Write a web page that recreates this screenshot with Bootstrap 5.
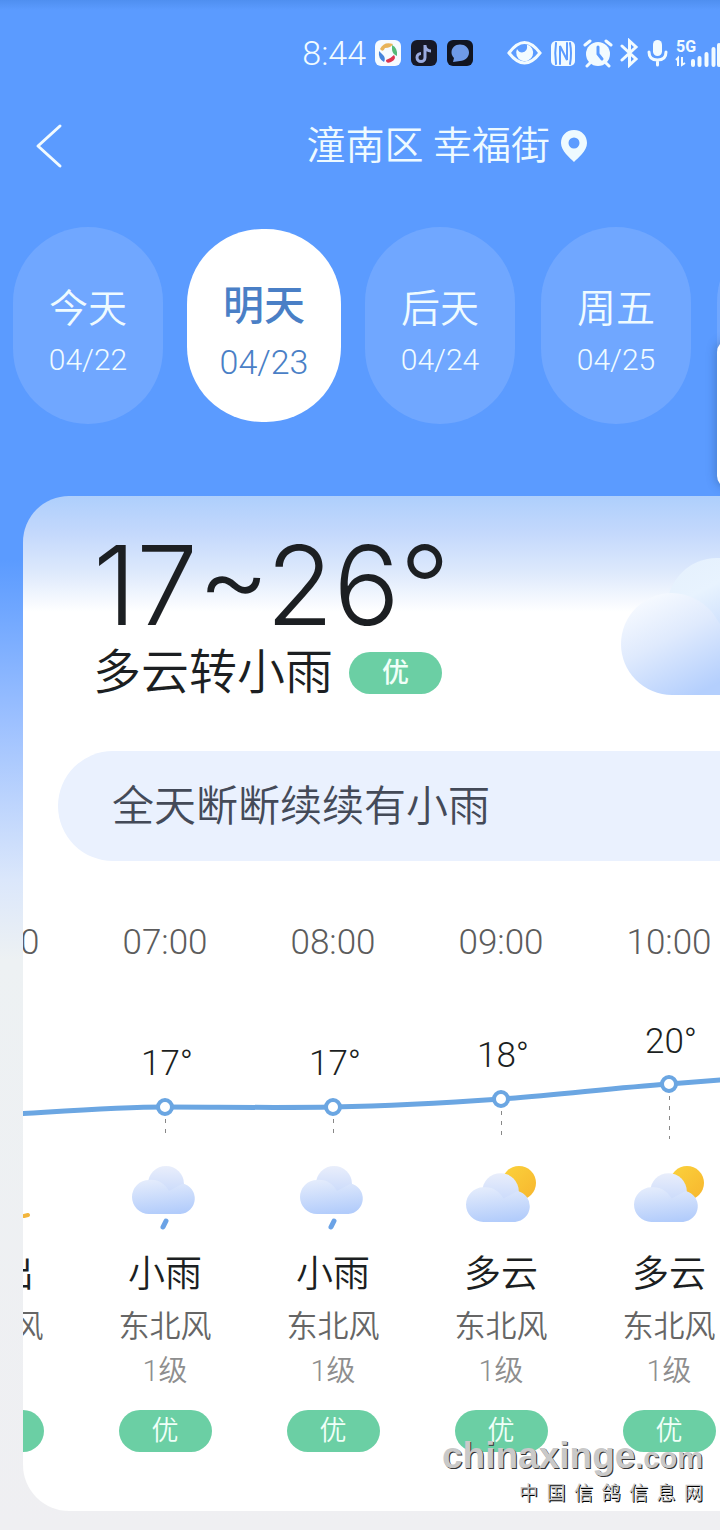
<!DOCTYPE html>
<html lang="zh-CN">
<head>
<meta charset="utf-8">
<meta name="viewport" content="width=device-width, initial-scale=1">
<title>天气预报</title>
<link href="https://cdn.jsdelivr.net/npm/bootstrap@5.3.0/dist/css/bootstrap.min.css" rel="stylesheet">
<style>
  body {
    font-family: Roboto, "Noto Sans CJK SC", sans-serif;
    font-weight: 350;
    color: #1c1f22;
    background: linear-gradient(#4f8ff0 0, #5b9bff 10px, #5b9bff 560px, #9cc0ff 720px, #dbe7fb 880px, #edf1f3 960px, #efeff2 1530px) #efeff2;
    background-repeat: no-repeat;
  }
  .screen { padding-bottom: 19px; }
  .status-bar { height: 106px; color: #f2fbff; overflow: hidden; }
  .clock { font-size: 34px; line-height: 40px; }
  .place-bar { height: 80px; padding: 0 132px 0 34px; color: #eefaff; }
  .place-name { font-size: 39px; line-height: 56px; }
  .days { margin-top: 38px; height: 203px; overflow: hidden; }
  .day-slot { flex: 0 0 176px; }
  .day-pill {
    width: 150px; height: 197px; border-radius: 75px; border: 0; padding: 12px 0 0;
    background: #70a7ff; color: #effbff; font-weight: 350;
  }
  .day-pill .day-name { font-size: 39px; line-height: 56px; }
  .day-pill .day-date { font-size: 30px; line-height: 46px; }
  .day-pill.active { width: 154px; height: 193px; background: #fff; color: #4a7fc6; }
  .day-pill.active .day-name { font-size: 41px; line-height: 60px; font-weight: 500; }
  .day-pill.active .day-date { font-size: 34px; line-height: 52px; }
  .side-tab { top: 340px; right: -21px; width: 24px; height: 148px; background: #fff; border-radius: 12px; box-shadow: -2px 0 8px rgba(40,80,130,.35); }
  .forecast {
    margin: 69px 0 0 23px; border-radius: 46px 0 0 46px; overflow: hidden;
    background: linear-gradient(#aecffc 0, #c3d8fc 36px, #dde9fc 76px, #fff 116px) #fff;
    padding-bottom: 59px;
  }
  .hero { padding: 31px 0 0 70px; height: 255px; }
  .range { font-family: Inter, sans-serif; font-size: 110px; line-height: 116px; font-weight: 350; }
  .summary-sky { font-size: 48px; line-height: 60px; }
  .air { width: 93px; height: 42px; border-radius: 21px; background: #6bcfa4; color: #f0fff8; font-size: 27px; line-height: 42px; text-align: center; }
  .air-main { font-weight: 500; }
  .big-cloud { top: 52px; right: 0; }
  .note { margin-left: 35px; height: 110px; padding-left: 54px; border-radius: 55px 0 0 55px; background: #eaf1fe; color: #444a58; font-size: 42px; }
  .track { width: 1008px; margin-left: -110px; }
  .slots { display: grid; grid-template-columns: repeat(6, 168px); text-align: center; }
  .hour { font-size: 35px; line-height: 52px; color: #5c5c5c; padding-top: 56px; }
  .curve text { font-size: 35px; fill: #1c1f22; text-anchor: middle; }
  .sky-icon { height: 72px; margin-top: 15px; }
  .sky { font-size: 37px; line-height: 54px; margin-top: 14px; }
  .wind { font-size: 31px; line-height: 46px; margin-top: 2px; color: #666; }
  .force { font-size: 29px; line-height: 42px; color: #8e8e8e; margin-bottom: 18px; }
  .site-mark { right: 17px; bottom: 24px; color: #c9c9c9; font-weight: 700; text-shadow: 1px 1px 0 #333; }
  .site-name { font-family: "Liberation Sans", sans-serif; font-size: 37px; line-height: 48px; }
  .site-name span { font-size: 29px; }
  .site-cn { width: 184px; margin-left: auto; font-size: 19px; line-height: 24px; font-weight: 400; color: #c4c4c4; text-shadow: 1px 1px 0 #000; }
</style>
</head>
<body>
<svg width="0" height="0" class="position-absolute" aria-hidden="true">
  <defs>
    <linearGradient id="puffTop" x1="0" y1="0" x2="0" y2="1"><stop offset="0" stop-color="#e9eefb"/><stop offset="1" stop-color="#c0d4fb"/></linearGradient>
    <linearGradient id="puff" x1=".3" y1="0" x2=".5" y2="1"><stop offset="0" stop-color="#e4ecfc"/><stop offset="1" stop-color="#b2ccfb"/></linearGradient>
    <linearGradient id="sun" x1="0" y1="0" x2="1" y2="1"><stop offset="0" stop-color="#fbd23c"/><stop offset="1" stop-color="#f7b62e"/></linearGradient>
    <symbol id="cloud" viewBox="0 0 64 48">
      <circle cx="34" cy="18" r="18" fill="url(#puffTop)"/>
      <path d="M17 48A17 17 0 0 1 17 14C26 13 33 18 37 25L51 17.500A15.500 15.500 0 0 1 48.500 48Z" fill="url(#puff)"/>
    </symbol>
    <symbol id="rain" viewBox="0 0 72 72">
      <use href="#cloud" x="3" y="4" width="64" height="48"/>
      <path d="M37 59l-3 6" stroke="#6ba3e6" stroke-width="5" stroke-linecap="round"/>
    </symbol>
    <symbol id="cloudy" viewBox="0 0 72 72">
      <circle cx="54" cy="21" r="17" fill="url(#sun)"/>
      <use href="#cloud" x="1" y="11" width="65" height="49"/>
    </symbol>
  </defs>
</svg>

<div class="screen position-relative overflow-hidden">
  <header class="status-bar d-flex align-items-center justify-content-end">
    <span class="clock me-2">8:44</span>
    <svg class="me-2" width="101" height="28" viewBox="0 0 101 28" aria-hidden="true">
      <rect x="1" y="1" width="26" height="26" rx="6" fill="#f6fbff"/>
      <path d="M6 10Q10 2 19 5Q17 9 11 9Q9 14 6 10Z" fill="#e8b45a"/>
      <path d="M18 6Q24 9 23 17Q18 15 18 10Z" fill="#55ba78"/>
      <path d="M5 12Q4 20 10 23Q12 19 9 16Z" fill="#4583dc"/>
      <path d="M12 21Q16 20 20 16Q23 20 17 23Q12 25 12 21Z" fill="#dc3550"/>
      <rect x="37" y="1" width="26" height="26" rx="6" fill="#171927"/>
      <path d="M51 6V18.500A4 4 0 1 1 47 14.500M51 7Q52 12 57 12" fill="none" stroke="#9aabe0" stroke-width="3"/>
      <rect x="73" y="1" width="26" height="26" rx="6" fill="#111522"/>
      <path d="M86 5.500C91 5.500 95 9 95 13.500S91 22 86 22L79 23L80 19C78 17 77.500 15 77.500 13.500C77.500 9 81 5.500 86 5.500Z" fill="#6e9ae8"/>
    </svg>
    <svg class="ms-4" width="166" height="30" viewBox="0 0 166 30" fill="none" stroke="#f2fbff" stroke-width="3" stroke-linecap="round" aria-hidden="true">
      <path d="M2 15Q17.500 -6 33 15Q17.500 35 2 15Z"/>
      <path fill="#f2fbff" stroke="none" fill-rule="evenodd" d="M10 11A8.500 8.500 0 1 0 20 6.500Q21 14 15 14.500Q12 14.500 10 11Z"/>
      <rect x="44" y="3" width="24" height="25" rx="5" fill="#f2fbff" stroke="none"/>
      <path d="M49 5Q47.500 15 49 26M53 26V8L60 22V5M63 26Q65 15 63 5" stroke="#5b9bff" stroke-width="2"/>
      <circle cx="91" cy="16" r="12" fill="#f2fbff" stroke="none"/>
      <path d="M78 7L83 3M99 3L104 7M83 25L80 28M99 25L102 28"/>
      <path d="M91 9V16L95 21" stroke="#5b9bff"/>
      <path d="M115 8L129 21L122.500 27V3L129 9L115 22"/>
      <rect x="146" y="2" width="9" height="16" rx="4.500" fill="#f2fbff" stroke="none"/>
      <path d="M142 14Q142 22 150.500 22T159 14M150.500 22V27"/>
    </svg>
    <svg width="47" height="30" viewBox="0 0 47 30" fill="#f2fbff" aria-label="5G">
      <text x="3" y="14" font-size="16" font-weight="700" font-family="Roboto, sans-serif">5G</text>
      <path d="M5 28V20L3 22M9 19V27L12 25" fill="none" stroke="#f2fbff" stroke-width="2"/>
      <path d="M20 27v-4M26.500 27v-7M33.500 27v-11M40.500 27v-16M46 27v-20" stroke="#f2fbff" stroke-width="4" stroke-linecap="round"/>
    </svg>
  </header>

  <nav class="place-bar d-flex align-items-center justify-content-between">
    <button type="button" class="btn p-0 border-0 lh-1" aria-label="返回">
      <svg width="30" height="46" viewBox="0 0 30 46" fill="none" stroke="#f2fbff" stroke-width="3" stroke-linecap="round" stroke-linejoin="round"><path d="M26 3L4 23L26 43"/></svg>
    </button>
    <div class="d-flex align-items-center">
      <span class="place-name">潼南区 幸福街</span>
      <svg class="ms-2" width="30" height="34" viewBox="0 0 30 34" aria-hidden="true"><path fill="#eefaff" fill-rule="evenodd" d="M16 1C24 1 29 7 29 14C29 22 20 29 16 33C12 29 3 22 3 14C3 7 8 1 16 1ZM16 8.500A5.500 5.500 0 1 0 16 19.500A5.500 5.500 0 1 0 16 8.500Z"/></svg>
    </div>
  </nav>

  <div class="days d-flex align-items-center">
    <div class="day-slot d-flex justify-content-center"><button type="button" class="day-pill"><span class="day-name d-block">今天</span><span class="day-date d-block">04/22</span></button></div>
    <div class="day-slot d-flex justify-content-center"><button type="button" class="day-pill active"><span class="day-name d-block">明天</span><span class="day-date d-block">04/23</span></button></div>
    <div class="day-slot d-flex justify-content-center"><button type="button" class="day-pill"><span class="day-name d-block">后天</span><span class="day-date d-block">04/24</span></button></div>
    <div class="day-slot d-flex justify-content-center"><button type="button" class="day-pill"><span class="day-name d-block">周五</span><span class="day-date d-block">04/25</span></button></div>
    <div class="day-slot d-flex justify-content-center"><button type="button" class="day-pill" aria-label="更多"></button></div>
  </div>
  <div class="side-tab position-absolute"></div>

  <main class="forecast">
    <section class="hero position-relative">
      <div class="range">17~26°</div>
      <div class="d-flex align-items-center">
        <span class="summary-sky">多云转小雨</span>
        <span class="air air-main ms-3">优</span>
      </div>
      <svg class="big-cloud position-absolute" width="102" height="154" viewBox="0 0 102 154" aria-hidden="true">
        <defs>
          <linearGradient id="bigBack" x1="0" y1="0" x2=".5" y2="1"><stop offset="0" stop-color="#e4f0fd"/><stop offset=".4" stop-color="#e8f3fe"/><stop offset="1" stop-color="#c0d6fd"/></linearGradient>
          <linearGradient id="bigFront" x1=".25" y1="0" x2=".75" y2="1"><stop offset="0" stop-color="#f8fbff"/><stop offset=".45" stop-color="#dfeafd"/><stop offset="1" stop-color="#b4cffd"/></linearGradient>
        </defs>
        <circle cx="99" cy="60" r="50" fill="url(#bigBack)"/>
        <path d="M54 147A51 51 0 0 1 54 45Q78 46 94 64L102 76V147Z" fill="url(#bigFront)"/>
      </svg>
    </section>

    <section class="note d-flex align-items-center">全天断断续续有小雨</section>

    <section class="track">
      <div class="slots hour">
        <span>06:00</span><span>07:00</span><span>08:00</span><span>09:00</span><span>10:00</span><span>11:00</span>
      </div>
      <svg class="curve d-block" width="1008" height="178" viewBox="0 0 1008 178">
        <path d="M84 146C140 143 200 138 252 138S364 139 420 138S532 134 588 130S700 119 756 115S868 106 924 102" fill="none" stroke="#6ba6e2" stroke-width="5"/>
        <g stroke="#888" stroke-dasharray="4 6"><path d="M252.500 150V170M420.500 150V170M588.500 142V166M756.500 127V170"/></g>
        <g fill="#fff" stroke="#6ba6e2" stroke-width="4"><circle cx="252" cy="138" r="7"/><circle cx="420" cy="138" r="7"/><circle cx="588" cy="130" r="7"/><circle cx="756" cy="115" r="7"/></g>
        <text x="254" y="106">17°</text><text x="422" y="106">17°</text><text x="590" y="98">18°</text><text x="758" y="84">20°</text>
      </svg>
      <div class="slots">
        <div>
          <svg class="sky-icon" width="72" viewBox="0 0 72 72" aria-hidden="true"><path d="M63 54l4-1" stroke="#f2b53c" stroke-width="4" stroke-linecap="round"/></svg>
          <div class="sky">日出</div><div class="wind">东北风</div><div class="force">1级</div><div class="air mx-auto">优</div>
        </div>
        <div>
          <svg class="sky-icon" width="72" aria-hidden="true"><use href="#rain"/></svg>
          <div class="sky">小雨</div><div class="wind">东北风</div><div class="force">1级</div><div class="air mx-auto">优</div>
        </div>
        <div>
          <svg class="sky-icon" width="72" aria-hidden="true"><use href="#rain"/></svg>
          <div class="sky">小雨</div><div class="wind">东北风</div><div class="force">1级</div><div class="air mx-auto">优</div>
        </div>
        <div>
          <svg class="sky-icon" width="72" aria-hidden="true"><use href="#cloudy"/></svg>
          <div class="sky">多云</div><div class="wind">东北风</div><div class="force">1级</div><div class="air mx-auto">优</div>
        </div>
        <div>
          <svg class="sky-icon" width="72" aria-hidden="true"><use href="#cloudy"/></svg>
          <div class="sky">多云</div><div class="wind">东北风</div><div class="force">1级</div><div class="air mx-auto">优</div>
        </div>
      </div>
    </section>
  </main>

  <footer class="site-mark position-absolute">
    <div class="site-name">chinaxinge<span>.com</span></div>
    <div class="site-cn d-flex justify-content-between"><span>中</span><span>国</span><span>信</span><span>鸽</span><span>信</span><span>息</span><span>网</span></div>
  </footer>
</div>
<script src="https://cdn.jsdelivr.net/npm/bootstrap@5.3.0/dist/js/bootstrap.bundle.min.js"></script>
</body>
</html>
